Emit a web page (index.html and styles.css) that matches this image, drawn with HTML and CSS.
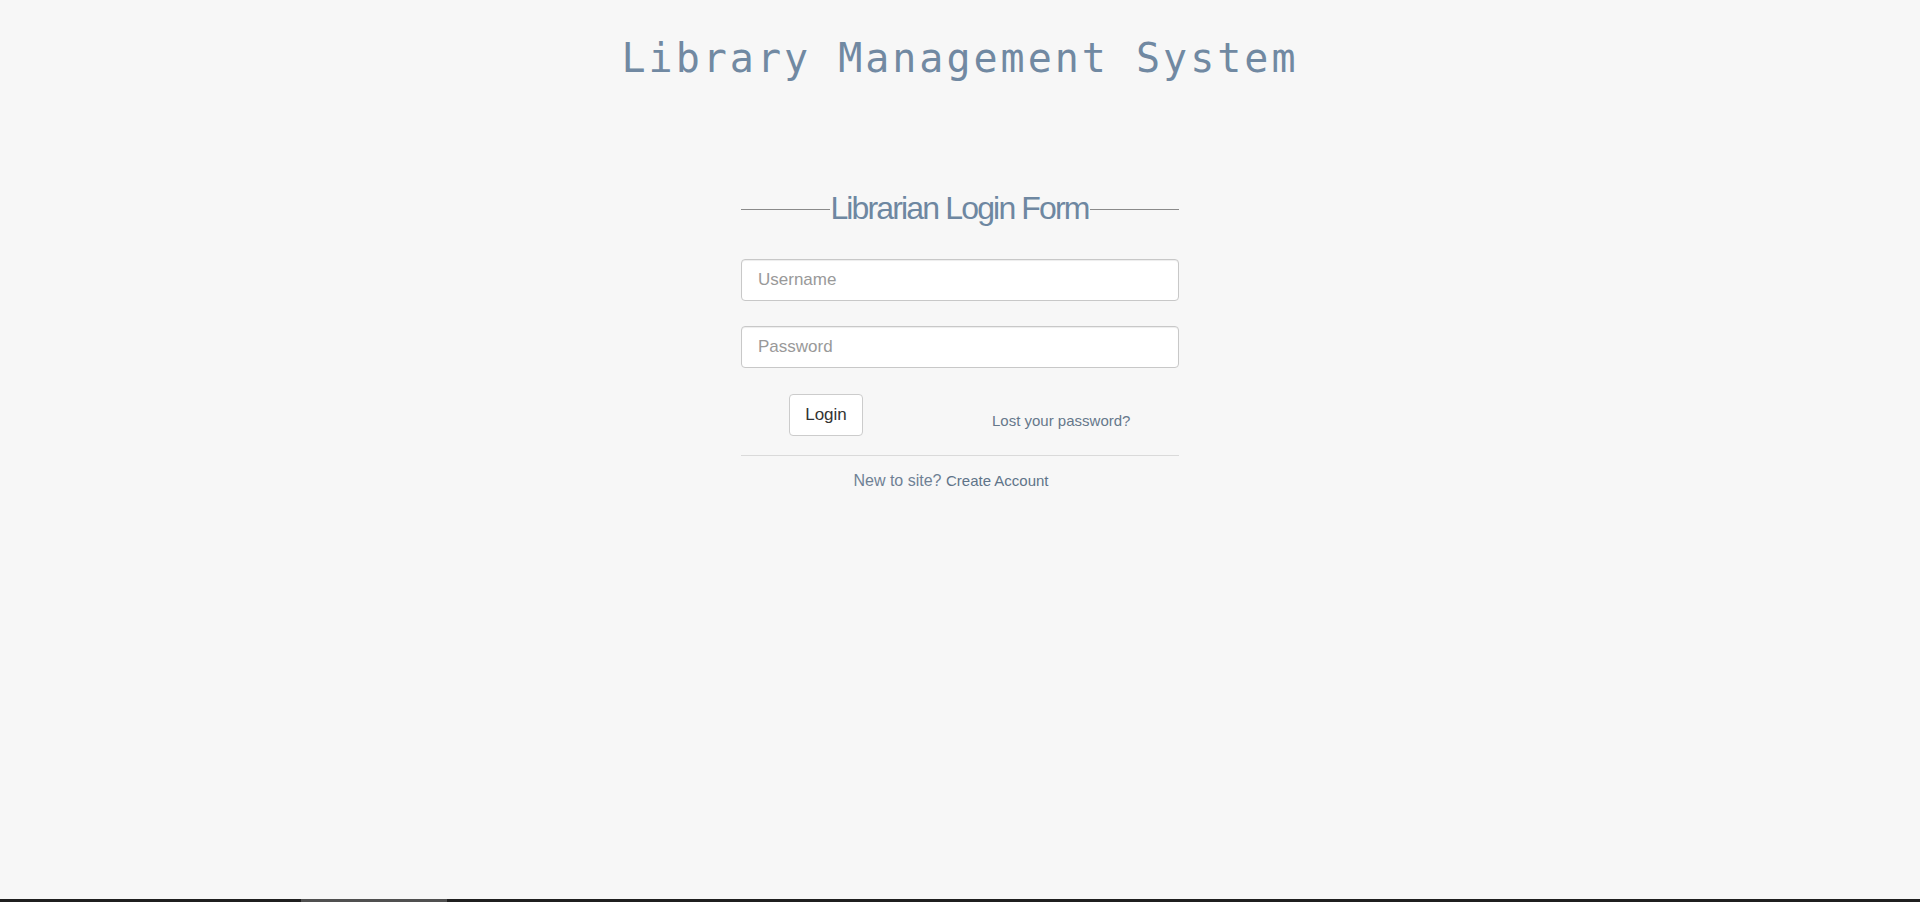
FILE: index.html
```html
<!DOCTYPE html>
<html lang="en">
<head>
<meta charset="utf-8">
<title>Library Management System</title>
<link rel="stylesheet" href="styles.css">
</head>
<body>
<div class="page">
  <h1 class="site-title">Library Management System</h1>
  <form class="login-form">
    <div class="legend"><span class="legend-text">Librarian Login Form</span></div>
    <input class="field field-user" type="text" placeholder="Username">
    <input class="field field-pass" type="password" placeholder="Password">
    <div class="actions">
      <button type="button" class="btn-login">Login</button>
      <a class="lost-link" href="#">Lost your password?</a>
    </div>
    <hr class="divider">
    <p class="signup"><span class="signup-q">New to site?</span> <a class="signup-link" href="#">Create Account</a></p>
  </form>
  <div class="scrollbar"><div class="scroll-thumb"></div></div>
</div>
</body>
</html>
```
FILE: styles.css
```css
* { box-sizing: border-box; }
html, body { margin: 0; padding: 0; }
body {
  background: #f7f7f7;
  font-family: "Liberation Sans", Arial, sans-serif;
}
.page {
  min-height: 100vh;
  display: flex;
  flex-direction: column;
  align-items: center;
}
.site-title {
  margin: 34px 0 0;
  font-family: "DejaVu Sans Mono", "Liberation Mono", monospace;
  font-weight: normal;
  font-size: 40px;
  line-height: 48px;
  letter-spacing: 3px;
  color: #7189a2;
}
.login-form {
  width: 438px;
  margin-top: 108px;
  display: flex;
  flex-direction: column;
}
.legend {
  display: flex;
  align-items: center;
  height: 36px;
}
.legend::before, .legend::after {
  content: "";
  flex: 1;
  height: 1px;
  background: #8a8a8a;
  margin-top: 2px;
}
.legend-text {
  font-size: 32px;
  line-height: 36px;
  letter-spacing: -1.85px;
  color: #6e87a1;
  padding-right: 1px;
}
.field {
  height: 42px;
  width: 100%;
  border: 1px solid #c8c8c8;
  border-radius: 4px;
  background: #fff;
  box-shadow: inset 0 1px 1px rgba(0,0,0,.075);
  padding: 0 16px;
  font-family: "Liberation Sans", Arial, sans-serif;
  font-size: 17px;
  color: #555;
}
.field::placeholder { color: #999; }
.field-user { margin-top: 33px; }
.field-pass { margin-top: 25px; }
.actions {
  margin-top: 26px;
  display: flex;
  align-items: flex-start;
}
.btn-login {
  margin-left: 48px;
  height: 42px;
  width: 74px;
  background: #fff;
  border: 1px solid #ccc;
  border-radius: 4px;
  font-family: "Liberation Sans", Arial, sans-serif;
  font-size: 17px;
  color: #333;
  padding: 0;
}
.lost-link {
  margin-left: 129px;
  margin-top: 18px;
  font-size: 15px;
  line-height: 17px;
  color: #66788b;
  text-decoration: none;
}
.divider {
  margin: 19px 0 0;
  border: 0;
  border-top: 1px solid #dadada;
  height: 0;
}
.signup {
  margin: 16px 0 0;
  text-align: center;
  padding-right: 18px;
  line-height: 18px;
}
.signup-q {
  font-size: 16px;
  color: #6f8195;
}
.signup-link {
  font-size: 15px;
  color: #5f7489;
  text-decoration: none;
}
.scrollbar {
  margin-top: auto;
  align-self: stretch;
  height: 3px;
  background: #1f1f1f;
  display: flex;
}
.scroll-thumb {
  margin-left: 301px;
  width: 146px;
  background: #505050;
}
```
